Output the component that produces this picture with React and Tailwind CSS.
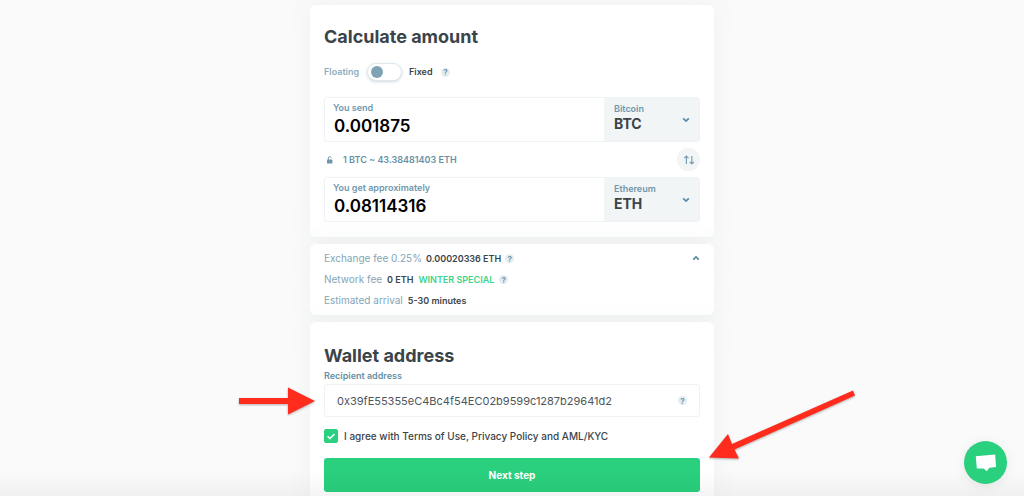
import React, { useState } from 'react';

const Help = ({ label }) => (
  <button
    type="button"
    aria-label={label}
    className="flex h-[9px] w-[9px] shrink-0 items-center justify-center rounded-full bg-[#e4edf1] text-[8px] leading-none font-bold text-[#6f99b0]"
  >
    ?
  </button>
);

const Chevron = ({ up }) => (
  <svg viewBox="0 0 8 6" className="h-[6px] w-[8px] shrink-0" fill="none" stroke="#5b8ba3" strokeWidth="1.7">
    <path d={up ? 'M1.2 4.6 4 1.9 6.8 4.6' : 'M1.2 1.4 4 4.1 6.8 1.4'} />
  </svg>
);

const AmountField = ({ id, label, value, onChange, coin, ticker }) => (
  <div className="flex h-[45px] overflow-hidden rounded-[3px] border border-[#edf3f4]">
    <div className="flex min-w-0 flex-1 flex-col px-2 pt-1">
      <label htmlFor={id} className="text-[9px] leading-3 font-semibold text-[#6f97ac]">{label}</label>
      <input
        id={id}
        value={value}
        onChange={onChange}
        className="h-6 w-full min-w-0 px-px text-[17px] leading-6 font-semibold text-black outline-none"
      />
    </div>
    <div className="flex w-[95px] items-center bg-[#f1f5f6] pr-[9px] pl-[10px]">
      <div className="flex min-w-0 flex-1 flex-col pb-1">
        <label htmlFor={`${id}-coin`} className="text-[9px] leading-3 font-semibold text-[#6f97ac]">{coin}</label>
        <select
          id={`${id}-coin`}
          defaultValue={ticker}
          className="h-[18px] w-full appearance-none bg-transparent text-[14px] leading-[18px] font-bold text-[#3b4449] outline-none"
        >
          <option>BTC</option>
          <option>ETH</option>
        </select>
      </div>
      <Chevron />
    </div>
  </div>
);

const card = 'rounded-md bg-white px-[14px] shadow-[0_0_26px_rgba(90,120,130,0.07)]';

const App = () => {
  const [send, setSend] = useState('0.001875');
  const [receive, setReceive] = useState('0.08114316');
  const [address, setAddress] = useState('0x39fE55355eC4Bc4f54EC02b9599c1287b29641d2');

  return (
    <div className="min-h-screen bg-[#fafafa] pt-[5px] font-['Inter',sans-serif] text-[#3b4449]">
      <main className="mx-auto flex w-full max-w-[404px] flex-col gap-[7px]">
        <section className={`${card} pt-5 pb-[15px]`}>
          <h2 className="text-[18px] leading-6 font-bold">Calculate amount</h2>

          <div className="mt-[14px] flex h-[18px] items-center text-[9px] font-semibold">
            <label htmlFor="rate" className="w-[43px] text-[#8eadbd]">Floating</label>
            <input
              id="rate"
              type="checkbox"
              role="switch"
              className="flex h-[18px] w-[35px] appearance-none items-center rounded-full border border-[#dfe9ed] bg-white pl-[3px] shadow-[0_1px_3px_rgba(60,100,120,0.25)] before:h-3 before:w-3 before:rounded-full before:bg-[#80a2b5] checked:before:ml-[17px]"
            />
            <label htmlFor="rate" className="w-[39px] pl-[7px]">Fixed</label>
            <Help label="About rates" />
          </div>

          <div className="mt-4">
            <AmountField
              id="send"
              label="You send"
              value={send}
              onChange={(e) => setSend(e.target.value)}
              coin="Bitcoin"
              ticker="BTC"
            />
            <div className="flex h-[35px] items-center">
              <svg viewBox="0 0 8 8" className="mr-[9px] ml-[2px] h-2 w-2" fill="none">
                <rect x="1" y="3.6" width="5.4" height="3.9" rx=".6" fill="#6f96ab" />
                <path d="M2.3 4V2.2a1.4 1.4 0 0 1 2.8-.2" stroke="#6f96ab" strokeWidth="1" />
              </svg>
              <span className="flex-1 text-[9px] font-semibold text-[#6690a6]">1 BTC ~ 43.38481403 ETH</span>
              <button
                type="button"
                aria-label="Swap currencies"
                className="flex h-[23px] w-[23px] items-center justify-center rounded-full bg-[#f1f5f6]"
              >
                <svg viewBox="0 0 12 10" className="h-[10px] w-3" fill="none" stroke="#7a9fb3" strokeWidth="1.2">
                  <path d="M3.4 9V1.2M1.3 3.2l2.1-2.1 2.1 2.1M8.8 1v7.8M6.7 6.8l2.1 2.1 2.1-2.1" />
                </svg>
              </button>
            </div>
            <AmountField
              id="receive"
              label="You get approximately"
              value={receive}
              onChange={(e) => setReceive(e.target.value)}
              coin="Ethereum"
              ticker="ETH"
            />
          </div>
        </section>

        <section className={`${card} flex items-start justify-between pt-1 pb-1`}>
          <div className="text-[9px] leading-[21px]">
            <div className="flex items-center gap-1">
              <span className="text-[10px] text-[#84a5b7]">Exchange fee 0.25%</span>
              <span className="font-semibold">0.00020336 ETH</span>
              <Help label="About the exchange fee" />
            </div>
            <div className="flex items-center gap-[5px]">
              <span className="text-[10px] text-[#84a5b7]">Network fee</span>
              <span className="font-semibold">0 ETH</span>
              <span className="font-semibold text-[#3fd389]">WINTER SPECIAL</span>
              <Help label="About the network fee" />
            </div>
            <div className="flex items-center gap-[5px]">
              <span className="text-[10px] text-[#84a5b7]">Estimated arrival</span>
              <span className="font-semibold">5-30 minutes</span>
            </div>
          </div>
          <button type="button" aria-label="Hide details" className="flex h-5 items-center">
            <Chevron up />
          </button>
        </section>

        <section className={`${card} rounded-b-none pt-5 pb-1`}>
          <h2 className="text-[18px] leading-7 font-bold">Wallet address</h2>
          <label htmlFor="address" className="block text-[9px] leading-3 font-semibold text-[#6690a6]">
            Recipient address
          </label>
          <div className="relative mt-[2px] flex h-[33px] items-center rounded-[3px] border border-[#edf3f4] px-3">
            <input
              id="address"
              value={address}
              onChange={(e) => setAddress(e.target.value)}
              className="min-w-0 flex-1 text-[11px] leading-4 text-[#4d565b] outline-none"
            />
            <Help label="About the recipient address" />
            <svg
              viewBox="0 0 78 32"
              className="pointer-events-none absolute top-0 -left-[87px] h-8 w-[78px] drop-shadow-[0_1px_1px_rgba(0,0,0,0.3)]"
            >
              <path d="M1 13h49V2.5L77 16 50 29.5V19H1z" fill="#ff2b1c" />
            </svg>
          </div>

          <div className="mt-3 flex h-[14px] items-center gap-[6px]">
            <span className="grid h-[14px] w-[14px]">
              <input
                id="agree"
                type="checkbox"
                defaultChecked
                className="peer col-start-1 row-start-1 h-[14px] w-[14px] appearance-none rounded-[2px] border border-[#2ad07d] checked:bg-[#2ad07d]"
              />
              <svg
                viewBox="0 0 14 14"
                className="pointer-events-none invisible col-start-1 row-start-1 h-[14px] w-[14px] peer-checked:visible"
                fill="none"
                stroke="white"
                strokeWidth="1.5"
              >
                <path d="m3.6 7.3 2.3 2.3 4.6-4.6" />
              </svg>
            </span>
            <label htmlFor="agree" className="text-[10px] leading-[14px] font-medium">
              I agree with Terms of Use, Privacy Policy and AML/KYC
            </label>
          </div>

          <div className="relative mt-[15px]">
            <button type="button" className="h-[34px] w-full rounded-[3px] bg-[#2ad07d] text-[10px] font-bold text-white">
              Next step
            </button>
            <svg
              viewBox="0 0 148 72"
              className="pointer-events-none absolute -top-[68px] -right-[156px] h-[72px] w-[148px] drop-shadow-[0_1px_1px_rgba(0,0,0,0.3)]"
            >
              <path d="M1 67.5 20 44l4 10L145 .5l2 5L26.5 59.5 31 68.5z" fill="#ff2b1c" />
            </svg>
          </div>
        </section>
      </main>

      <div className="pointer-events-none fixed inset-x-0 bottom-0 h-6 bg-linear-to-b from-transparent to-black/4" />

      <button
        type="button"
        aria-label="Open chat"
        className="fixed right-[17px] bottom-3 flex h-[43px] w-[43px] items-center justify-center rounded-full bg-[#2ad07d] shadow-[0_2px_12px_rgba(0,0,0,0.08)]"
      >
        <svg viewBox="0 0 22 18" className="h-[18px] w-[22px]" fill="white">
          <path d="M.8 2.3 20.2.5l.8 12.5-6.7.8-2.5 3.5-3.2-2.9-6.8.2z" />
        </svg>
      </button>
    </div>
  );
};

export default App;
